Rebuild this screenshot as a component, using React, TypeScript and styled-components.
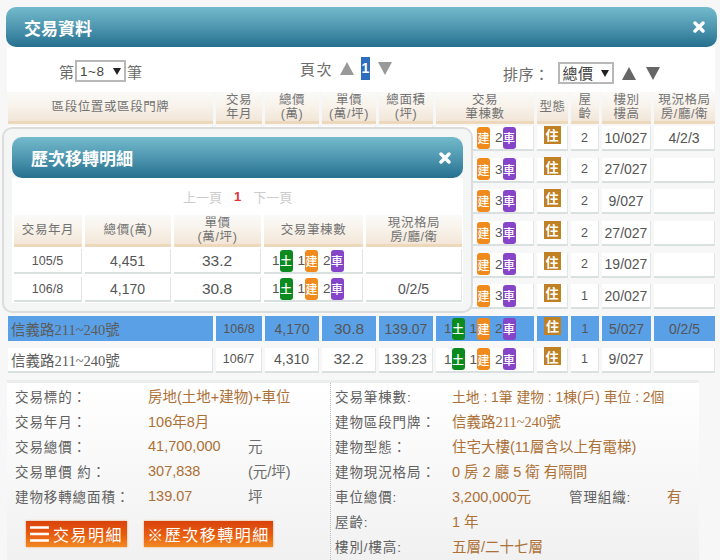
import styled, { createGlobalStyle } from "styled-components";

const GlobalStyle = createGlobalStyle`
  html, body {
    margin: 0;
    padding: 0;
    background: #f7f7f7;
  }
  body {
    font-family: "Liberation Sans", "Noto Sans CJK TC", sans-serif;
    color: #555;
  }
`;

const Page = styled.div`
  width: 720px;
  height: 560px;
  overflow: hidden;
  padding: 7px 3px 0 6px;
  box-sizing: border-box;
`;

const TitleBar = styled.div<{ $height: number; $pad: number }>`
  height: ${(p) => p.$height}px;
  border-radius: 10px;
  background: linear-gradient(to bottom, #73bacc 0%, #4f97b0 50%, #26708f 100%);
  color: #fff;
  font-size: 17px;
  font-weight: bold;
  display: flex;
  align-items: center;
  justify-content: space-between;
  padding: 0 12px 0 ${(p) => p.$pad}px;
`;

const CloseIcon = () => (
  <svg width="12" height="12" viewBox="0 0 12 12">
    <path d="M2 2 L10 10 M10 2 L2 10" stroke="#fff" strokeWidth="3.4" strokeLinecap="round" />
  </svg>
);

const Toolbar = styled.div`
  width: 708px;
  height: 45px;
  margin-left: 1px;
  background: #fff;
  display: grid;
  grid-template-columns: 241px 203px 1fr;
  padding-left: 52px;
  box-sizing: border-box;
`;

const ToolGroup = styled.div<{ $top: number }>`
  display: flex;
  align-items: center;
  height: 26px;
  margin-top: ${(p) => p.$top}px;
  font-size: 15px;
  color: #6c6c6c;
  white-space: nowrap;
`;

const SelectBox = styled.span<{ $width: number }>`
  position: relative;
  display: inline-block;
  width: ${(p) => p.$width}px;
  height: 22px;
  margin: 0 1px;

  &::after {
    content: "";
    position: absolute;
    right: 5px;
    top: 8px;
    border-left: 4px solid transparent;
    border-right: 4px solid transparent;
    border-top: 7px solid #222;
    pointer-events: none;
  }
`;

const NativeSelect = styled.select<{ $size: number }>`
  appearance: none;
  width: 100%;
  height: 100%;
  display: block;
  box-sizing: border-box;
  font-family: "Liberation Sans", "Noto Sans CJK TC", sans-serif;
  font-size: ${(p) => p.$size}px;
  letter-spacing: 0.5px;
  color: #444;
  background: #fff;
  border: 2px solid #b8b8b8;
  border-radius: 0;
  padding: 0 0 0 3px;
`;

const PageLabel = styled.span`
  margin-right: 7px;
  letter-spacing: 1.5px;
`;

const PageNumber = styled.span`
  width: 9px;
  height: 23px;
  margin: 0 8px 0 7px;
  background: #2f6ebd;
  color: #fff;
  font-size: 14px;
  font-weight: bold;
  display: flex;
  align-items: center;
  justify-content: center;
`;

const Arrow = ({ down, color }: { down?: boolean; color: string }) => (
  <svg width="14" height="13" viewBox="0 0 14 13">
    <path d={down ? "M0 0 H14 L7 13 Z" : "M7 0 L14 13 H0 Z"} fill={color} />
  </svg>
);

const SortLabel = styled.span`
  margin-right: 7px;
  letter-spacing: 0.5px;
`;

const SortArrows = styled.span`
  display: flex;
  gap: 10px;
  margin-left: 7px;
`;

const TableArea = styled.div`
  position: relative;
  width: 708px;
  margin-left: 2px;
`;

const cols = "205px 46px 54px 54px 54px 98px 31px 28px 49px 61px";

const Grid = styled.div<{ $cols: string }>`
  display: grid;
  grid-template-columns: ${(p) => p.$cols};
  column-gap: 3px;
  font-size: 13px;
`;

const ModalGrid = styled(Grid)`
  margin-left: 2px;
`;

const HeadCell = styled.div`
  box-sizing: border-box;
  height: 32px;
  margin-bottom: 2px;
  background: linear-gradient(to bottom, #fafaf8 0%, #f8f2ea 50%, #f2e6d8 100%);
  border-bottom: 3px solid #eed8bc;
  color: #737373;
  font-size: 12.5px;
  line-height: 14px;
  letter-spacing: 0.6px;
  text-align: center;
  display: flex;
  align-items: center;
  justify-content: center;
`;

const Cell = styled.div<{ $active?: boolean; $left?: number; $size?: number; $gap?: number }>`
  box-sizing: border-box;
  height: 25px;
  margin-bottom: ${(p) => p.$gap ?? 6.7}px;
  background: ${(p) => (p.$active ? "#5aa0e6" : "#fff")};
  border-right: ${(p) => (p.$active ? "0" : "1.5px solid #dfe6e6")};
  border-bottom: ${(p) => (p.$active ? "0" : "2px solid #d8e0e0")};
  color: #555;
  font-size: ${(p) => p.$size ?? 13}px;
  display: flex;
  align-items: center;
  justify-content: ${(p) => (p.$left ? "flex-start" : "center")};
  padding-left: ${(p) => p.$left ?? 0}px;
  white-space: nowrap;
`;

const Address = styled.span`
  font-family: "Liberation Serif", "Noto Sans CJK TC", serif;
  font-size: 14.5px;
  color: #5c5c5c;
`;

const BADGE_COLORS: Record<string, string> = {
  土: "#0b8a1f",
  建: "#f08a1c",
  車: "#8644c8",
};

const Badge = styled.span<{ $kind: string }>`
  width: 13px;
  height: 22px;
  margin-right: 5px;
  border-radius: 3px;
  background: ${(p) => BADGE_COLORS[p.$kind]};
  color: #fff;
  font-size: 12px;
  font-weight: 500;
  display: flex;
  align-items: center;
  justify-content: center;
`;

const Counts = styled.div`
  display: flex;
  align-items: center;
  font-size: 13.5px;
`;

const Covered = styled.span<{ $hide?: boolean }>`
  display: flex;
  align-items: center;
  visibility: ${(p) => (p.$hide ? "hidden" : "visible")};
`;

const TypeTag = styled.span`
  width: 17px;
  height: 18px;
  margin-top: -6px;
  background: #c08024;
  color: #fff;
  font-size: 13px;
  font-weight: bold;
  display: flex;
  align-items: center;
  justify-content: center;
`;

const Modal = styled.div`
  position: absolute;
  left: -6px;
  top: 35px;
  width: 471px;
  height: 186px;
  box-sizing: border-box;
  padding: 8px 8px 0 8px;
  background: #f4f5f5;
  border: 2px solid #dcdcdc;
  border-radius: 10px;
`;

const ModalBody = styled.div`
  background: #fff;
  height: 125px;
`;

const Pager = styled.div`
  height: 37px;
  padding-left: 171px;
  display: flex;
  align-items: center;
  gap: 12px;
  color: #ccc;
  font-size: 13px;
  box-sizing: border-box;
`;

const PagerCurrent = styled.span`
  color: #e2333a;
  font-weight: bold;
`;

const Details = styled.div`
  width: 692px;
  height: 180px;
  margin-left: 1px;
  background: linear-gradient(to bottom, #fff 0%, #f1f1f1 100%);
  display: grid;
  grid-template-columns: 323px 1fr;
  border-top: 3px solid #eceeee;
  box-sizing: border-box;
`;

const DetailColumn = styled.div<{ $divider?: boolean }>`
  padding: 0.5px 0 0 ${(p) => (p.$divider ? 4 : 8)}px;
  border-left: ${(p) => (p.$divider ? "1px dotted #bbb" : "0")};
`;

const DetailRow = styled.div<{ $cols: string }>`
  display: grid;
  grid-template-columns: ${(p) => p.$cols};
  height: 25px;
  align-items: center;
  font-size: 14.5px;
  white-space: nowrap;
`;

const Label = styled.span`
  color: #606060;
  font-size: 13.5px;
  letter-spacing: 0.9px;
`;

const Value = styled.span<{ $serif?: boolean; $size?: number }>`
  color: #ad7036;
  font-size: ${(p) => p.$size ?? 14.5}px;
  font-family: ${(p) =>
    p.$serif
      ? `"Liberation Serif", "Noto Sans CJK TC", serif`
      : `"Liberation Sans", "Noto Sans CJK TC", sans-serif`};
`;

const Unit = styled.span`
  color: #6c6c6c;
`;

const Buttons = styled.div`
  display: flex;
  gap: 17px;
  margin: 13px 0 0 11px;
`;

const ActionButton = styled.button<{ $width: number }>`
  width: ${(p) => p.$width}px;
  height: 26px;
  padding: 0;
  border: 0;
  background: linear-gradient(to bottom, #d9430c 0%, #e85d10 55%, #f28a24 100%);
  box-shadow: 0 0 2px #e9a46a;
  color: #fff;
  font-family: "Liberation Sans", "Noto Sans CJK TC", sans-serif;
  font-size: 16px;
  letter-spacing: 1.5px;
  display: flex;
  align-items: center;
  justify-content: center;
  gap: 4px;
`;

const MenuIcon = () => (
  <svg width="19" height="16" viewBox="0 0 19 16">
    <path d="M0 1.5 H19 M0 8 H19 M0 14.5 H19" stroke="#fff" strokeWidth="2.6" />
  </svg>
);

const Counted = ({ car, hideLand }: { car: number; hideLand?: boolean }) => (
  <Counts>
    <Covered $hide={hideLand}>
      1<Badge $kind="土">土</Badge>1
    </Covered>
    <Badge $kind="建">建</Badge>
    {car}
    <Badge $kind="車">車</Badge>
  </Counts>
);

type RowData = {
  date?: string;
  total?: string;
  unit?: string;
  area?: string;
  car: number;
  age: number;
  floor: string;
  plan?: string;
  active?: boolean;
};

// the first six rows sit behind the modal, only their right part shows
const rows: RowData[] = [
  { car: 2, age: 2, floor: "10/027", plan: "4/2/3" },
  { car: 3, age: 2, floor: "27/027" },
  { car: 3, age: 2, floor: "9/027" },
  { car: 3, age: 2, floor: "27/027" },
  { car: 2, age: 2, floor: "19/027" },
  { car: 3, age: 1, floor: "20/027" },
  { date: "106/8", total: "4,170", unit: "30.8", area: "139.07", car: 2, age: 1, floor: "5/027", plan: "0/2/5", active: true },
  { date: "106/7", total: "4,310", unit: "32.2", area: "139.23", car: 2, age: 1, floor: "9/027" },
];

const heads = [
  ["區段位置或區段門牌"],
  ["交易", "年月"],
  ["總價", "(萬)"],
  ["單價", "(萬/坪)"],
  ["總面積", "(坪)"],
  ["交易", "筆棟數"],
  ["型態"],
  ["屋", "齡"],
  ["樓別", "樓高"],
  ["現況格局", "房/廳/衛"],
];

const modalHeads = [["交易年月"], ["總價(萬)"], ["單價", "(萬/坪)"], ["交易筆棟數"], ["現況格局", "房/廳/衛"]];

const modalRows = [
  { date: "105/5", total: "4,451", unit: "33.2", plan: "" },
  { date: "106/8", total: "4,170", unit: "30.8", plan: "0/2/5" },
];

const Heads = ({ items }: { items: string[][] }) => (
  <>
    {items.map((lines, i) => (
      <HeadCell key={i}>
        <div>
          {lines.map((line) => (
            <div key={line}>{line}</div>
          ))}
        </div>
      </HeadCell>
    ))}
  </>
);

const leftCols = "133px 100px 1fr";
const rightCols = "117px 1fr";

function Row({ row }: { row: RowData }) {
  const a = row.active;
  return (
    <>
      <Cell $active={a} $left={row.date ? 3 : undefined}>
        {row.date && <Address>信義路211~240號</Address>}
      </Cell>
      <Cell $active={a} $size={12.5}>
        {row.date}
      </Cell>
      <Cell $active={a} $size={14}>
        {row.total}
      </Cell>
      <Cell $active={a} $size={15.5}>
        {row.unit}
      </Cell>
      <Cell $active={a} $size={14}>
        {row.area}
      </Cell>
      <Cell $active={a} $left={8}>
        <Counted car={row.car} hideLand={!row.date} />
      </Cell>
      <Cell $active={a}>
        <TypeTag>住</TypeTag>
      </Cell>
      <Cell $active={a} $size={12.5}>
        {row.age}
      </Cell>
      <Cell $active={a} $size={14}>
        {row.floor}
      </Cell>
      <Cell $active={a} $size={14}>
        {row.plan}
      </Cell>
    </>
  );
}

function ModalRow({ row }: { row: (typeof modalRows)[number] }) {
  return (
    <>
      <Cell $gap={3} $size={12.5}>
        {row.date}
      </Cell>
      <Cell $gap={3} $size={14}>
        {row.total}
      </Cell>
      <Cell $gap={3} $size={15.5}>
        {row.unit}
      </Cell>
      <Cell $gap={3} $left={8}>
        <Counted car={2} />
      </Cell>
      <Cell $gap={3} $size={14}>
        {row.plan}
      </Cell>
    </>
  );
}

export default function App() {
  return (
    <Page>
      <GlobalStyle />
      <TitleBar $height={40} $pad={18}>
        交易資料
        <CloseIcon />
      </TitleBar>
      <Toolbar>
        <ToolGroup $top={11}>
          第
          <SelectBox $width={51}>
            <NativeSelect $size={13.5} defaultValue="1~8">
              <option>1~8</option>
            </NativeSelect>
          </SelectBox>
          筆
        </ToolGroup>
        <ToolGroup $top={8}>
          <PageLabel>頁次</PageLabel>
          <Arrow color="#999" />
          <PageNumber>1</PageNumber>
          <Arrow down color="#999" />
        </ToolGroup>
        <ToolGroup $top={13}>
          <SortLabel>排序：</SortLabel>
          <SelectBox $width={56}>
            <NativeSelect $size={15} defaultValue="總價">
              <option>總價</option>
            </NativeSelect>
          </SelectBox>
          <SortArrows>
            <Arrow color="#666" />
            <Arrow down color="#666" />
          </SortArrows>
        </ToolGroup>
      </Toolbar>
      <TableArea>
        <Grid $cols={cols}>
          <Heads items={heads} />
          {rows.map((r, i) => (
            <Row key={i} row={r} />
          ))}
        </Grid>
        <Modal>
          <TitleBar $height={41} $pad={19}>
            歷次移轉明細
            <CloseIcon />
          </TitleBar>
          <ModalBody>
            <Pager>
              <span>上一頁</span>
              <PagerCurrent>1</PagerCurrent>
              <span>下一頁</span>
            </Pager>
            <ModalGrid $cols="68px 86px 87px 99px 96px">
              <Heads items={modalHeads} />
              {modalRows.map((r) => (
                <ModalRow key={r.date} row={r} />
              ))}
            </ModalGrid>
          </ModalBody>
        </Modal>
      </TableArea>
      <Details>
        <DetailColumn>
          <DetailRow $cols={leftCols}>
            <Label>交易標的：</Label>
            <Value>房地(土地+建物)+車位</Value>
          </DetailRow>
          <DetailRow $cols={leftCols}>
            <Label>交易年月：</Label>
            <Value>106年8月</Value>
          </DetailRow>
          <DetailRow $cols={leftCols}>
            <Label>交易總價：</Label>
            <Value>41,700,000</Value>
            <Unit>元</Unit>
          </DetailRow>
          <DetailRow $cols={leftCols}>
            <Label>交易單價 約：</Label>
            <Value>307,838</Value>
            <Unit>(元/坪)</Unit>
          </DetailRow>
          <DetailRow $cols={leftCols}>
            <Label>建物移轉總面積：</Label>
            <Value>139.07</Value>
            <Unit>坪</Unit>
          </DetailRow>
          <Buttons>
            <ActionButton $width={101}>
              <MenuIcon />
              交易明細
            </ActionButton>
            <ActionButton $width={129}>※歷次移轉明細</ActionButton>
          </Buttons>
        </DetailColumn>
        <DetailColumn $divider>
          <DetailRow $cols={rightCols}>
            <Label>交易筆棟數:</Label>
            <Value $size={13.8}>土地 : 1筆 建物 : 1棟(戶) 車位 : 2個</Value>
          </DetailRow>
          <DetailRow $cols={rightCols}>
            <Label>建物區段門牌：</Label>
            <Value $serif>信義路211~240號</Value>
          </DetailRow>
          <DetailRow $cols={rightCols}>
            <Label>建物型態：</Label>
            <Value>住宅大樓(11層含以上有電梯)</Value>
          </DetailRow>
          <DetailRow $cols={rightCols}>
            <Label>建物現況格局：</Label>
            <Value>0 房 2 廳 5 衛 有隔間</Value>
          </DetailRow>
          <DetailRow $cols="117px 117px 98px 1fr">
            <Label>車位總價:</Label>
            <Value>3,200,000元</Value>
            <Label>管理組織:</Label>
            <Value>有</Value>
          </DetailRow>
          <DetailRow $cols={rightCols}>
            <Label>屋齡:</Label>
            <Value>1 年</Value>
          </DetailRow>
          <DetailRow $cols={rightCols}>
            <Label>樓別/樓高:</Label>
            <Value>五層/二十七層</Value>
          </DetailRow>
        </DetailColumn>
      </Details>
    </Page>
  );
}
